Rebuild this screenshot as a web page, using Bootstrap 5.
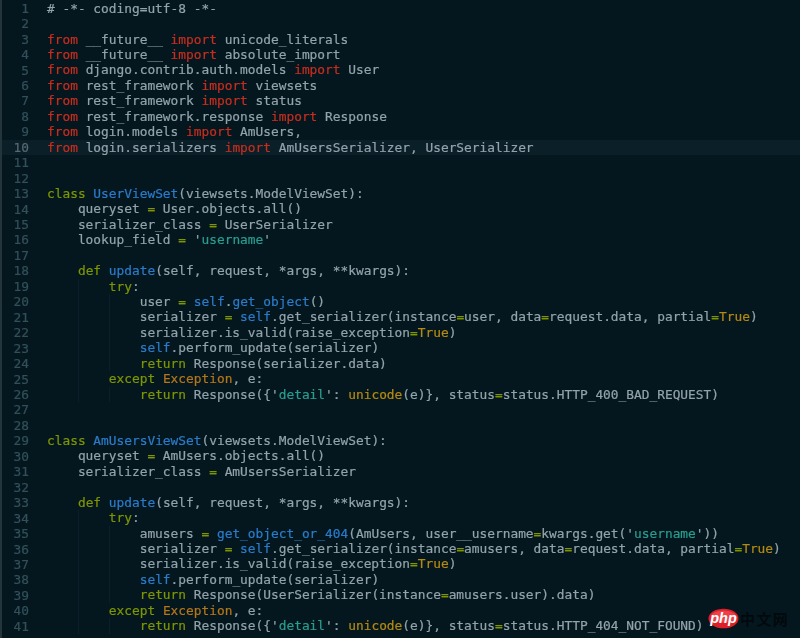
<!DOCTYPE html>
<html lang="en"><head><meta charset="utf-8"><title>views.py</title>
<link href="https://cdn.jsdelivr.net/npm/bootstrap@5.3.0/dist/css/bootstrap.min.css" rel="stylesheet">
<style>
html,body{height:100%;}
body{background:#04171f;overflow:hidden;}
.editor{height:638px;overflow:hidden;background:#04171f;border-left:2px solid #24343b;font-family:"DejaVu Sans Mono","Liberation Mono",monospace;font-size:12.84px;line-height:15.45px;color:#93a3aa;filter:blur(.35px);padding-top:.7px;-webkit-text-stroke:.2px currentColor;}
.gut{width:45px;flex:none;text-align:right;padding-right:18px;color:#33505a;white-space:pre;position:relative;z-index:1;}
.gut .on{color:#566a72;}
.src{flex:1;min-width:0;}
.ln{height:15.45px;white-space:pre;}
.ln.act{background:#0b1f28;margin-left:-47px;padding-left:47px;}
.i1{background:linear-gradient(#0c1f28,#0c1f28) 31px 0/1px 100% no-repeat;}
.i2{background:linear-gradient(#0c1f28,#0c1f28) 31px 0/1px 100% no-repeat,linear-gradient(#0c1f28,#0c1f28) 62px 0/1px 100% no-repeat;}
.k{color:#c72e1f}.g{color:#7f9600}.b{color:#2a7ccb}.s{color:#2a9d8f}.y{color:#b58a10}.o{color:#b5761a}
.badgewrap{position:absolute;left:708px;top:608px;display:flex;align-items:center;gap:1px;}
.cn{font-family:"Noto Sans CJK SC",sans-serif;font-size:15px;font-weight:700;line-height:1;letter-spacing:1.4px;color:#02090d;}
</style></head><body>
<div class="editor d-flex">
<div class="gut">1
2
3
4
5
6
7
8
9
<span class="on">10</span>
11
12
13
14
15
16
17
18
19
20
21
22
23
24
25
26
27
28
29
30
31
32
33
34
35
36
37
38
39
40
41</div>
<div class="src"><div class="ln"># -*- coding=utf-8 -*-</div><div class="ln"></div><div class="ln"><span class="k">from</span> __future__ <span class="k">import</span> unicode_literals</div><div class="ln"><span class="k">from</span> __future__ <span class="k">import</span> absolute_import</div><div class="ln"><span class="k">from</span> django.contrib.auth.models <span class="k">import</span> User</div><div class="ln"><span class="k">from</span> rest_framework <span class="k">import</span> viewsets</div><div class="ln"><span class="k">from</span> rest_framework <span class="k">import</span> status</div><div class="ln"><span class="k">from</span> rest_framework.response <span class="k">import</span> Response</div><div class="ln"><span class="k">from</span> login.models <span class="k">import</span> AmUsers,</div><div class="ln act"><span class="k">from</span> login.serializers <span class="k">import</span> AmUsersSerializer, UserSerializer</div><div class="ln"></div><div class="ln"></div><div class="ln"><span class="g">class</span> <span class="b">UserViewSet</span>(viewsets.ModelViewSet):</div><div class="ln">    queryset <span class="g">=</span> User.objects.all()</div><div class="ln">    serializer_class <span class="g">=</span> UserSerializer</div><div class="ln">    lookup_field <span class="g">=</span> '<span class="s">username</span>'</div><div class="ln"></div><div class="ln">    <span class="g">def</span> <span class="b">update</span>(self, request, *args, **kwargs):</div><div class="ln i1">        <span class="g">try</span>:</div><div class="ln i2">            user <span class="g">=</span> <span class="b">self</span>.<span class="b">get_object</span>()</div><div class="ln i2">            serializer <span class="g">=</span> <span class="b">self</span>.get_serializer(instance<span class="g">=</span>user, data<span class="g">=</span>request.data, partial<span class="g">=</span><span class="y">True</span>)</div><div class="ln i2">            serializer.is_valid(raise_exception<span class="g">=</span><span class="y">True</span>)</div><div class="ln i2">            <span class="b">self</span>.perform_update(serializer)</div><div class="ln i2">            <span class="g">return</span> Response(serializer.data)</div><div class="ln i1">        <span class="g">except</span> <span class="o">Exception</span>, e:</div><div class="ln i2">            <span class="g">return</span> Response({'<span class="s">detail</span>': <span class="y">unicode</span>(e)}, status<span class="g">=</span>status.HTTP_400_BAD_REQUEST)</div><div class="ln"></div><div class="ln"></div><div class="ln"><span class="g">class</span> <span class="b">AmUsersViewSet</span>(viewsets.ModelViewSet):</div><div class="ln">    queryset <span class="g">=</span> AmUsers.objects.all()</div><div class="ln">    serializer_class <span class="g">=</span> AmUsersSerializer</div><div class="ln"></div><div class="ln">    <span class="g">def</span> <span class="b">update</span>(self, request, *args, **kwargs):</div><div class="ln i1">        <span class="g">try</span>:</div><div class="ln i2">            amusers <span class="g">=</span> <span class="b">get_object_or_404</span>(AmUsers, user__username<span class="g">=</span>kwargs.get('<span class="s">username</span>'))</div><div class="ln i2">            serializer <span class="g">=</span> <span class="b">self</span>.get_serializer(instance<span class="g">=</span>amusers, data<span class="g">=</span>request.data, partial<span class="g">=</span><span class="y">True</span>)</div><div class="ln i2">            serializer.is_valid(raise_exception<span class="g">=</span><span class="y">True</span>)</div><div class="ln i2">            <span class="b">self</span>.perform_update(serializer)</div><div class="ln i2">            <span class="g">return</span> Response(UserSerializer(instance<span class="g">=</span>amusers.user).data)</div><div class="ln i1">        <span class="g">except</span> <span class="o">Exception</span>, e:</div><div class="ln i2">            <span class="g">return</span> Response({'<span class="s">detail</span>': <span class="y">unicode</span>(e)}, status<span class="g">=</span>status.HTTP_404_NOT_FOUND)</div></div>
</div>
<div class="badgewrap">
<svg width="31" height="21" viewBox="0 0 31 21"><ellipse cx="15.5" cy="10.5" rx="15" ry="9.8" fill="#dc1f2a"/><ellipse cx="15.5" cy="8.5" rx="12.5" ry="6" fill="#ee4049"/><text x="15.5" y="14.5" text-anchor="middle" font-family="Liberation Sans" font-style="italic" font-weight="700" font-size="14.5" fill="#fff">php</text></svg>
<span class="cn">中文网</span>
</div>
</body></html>
